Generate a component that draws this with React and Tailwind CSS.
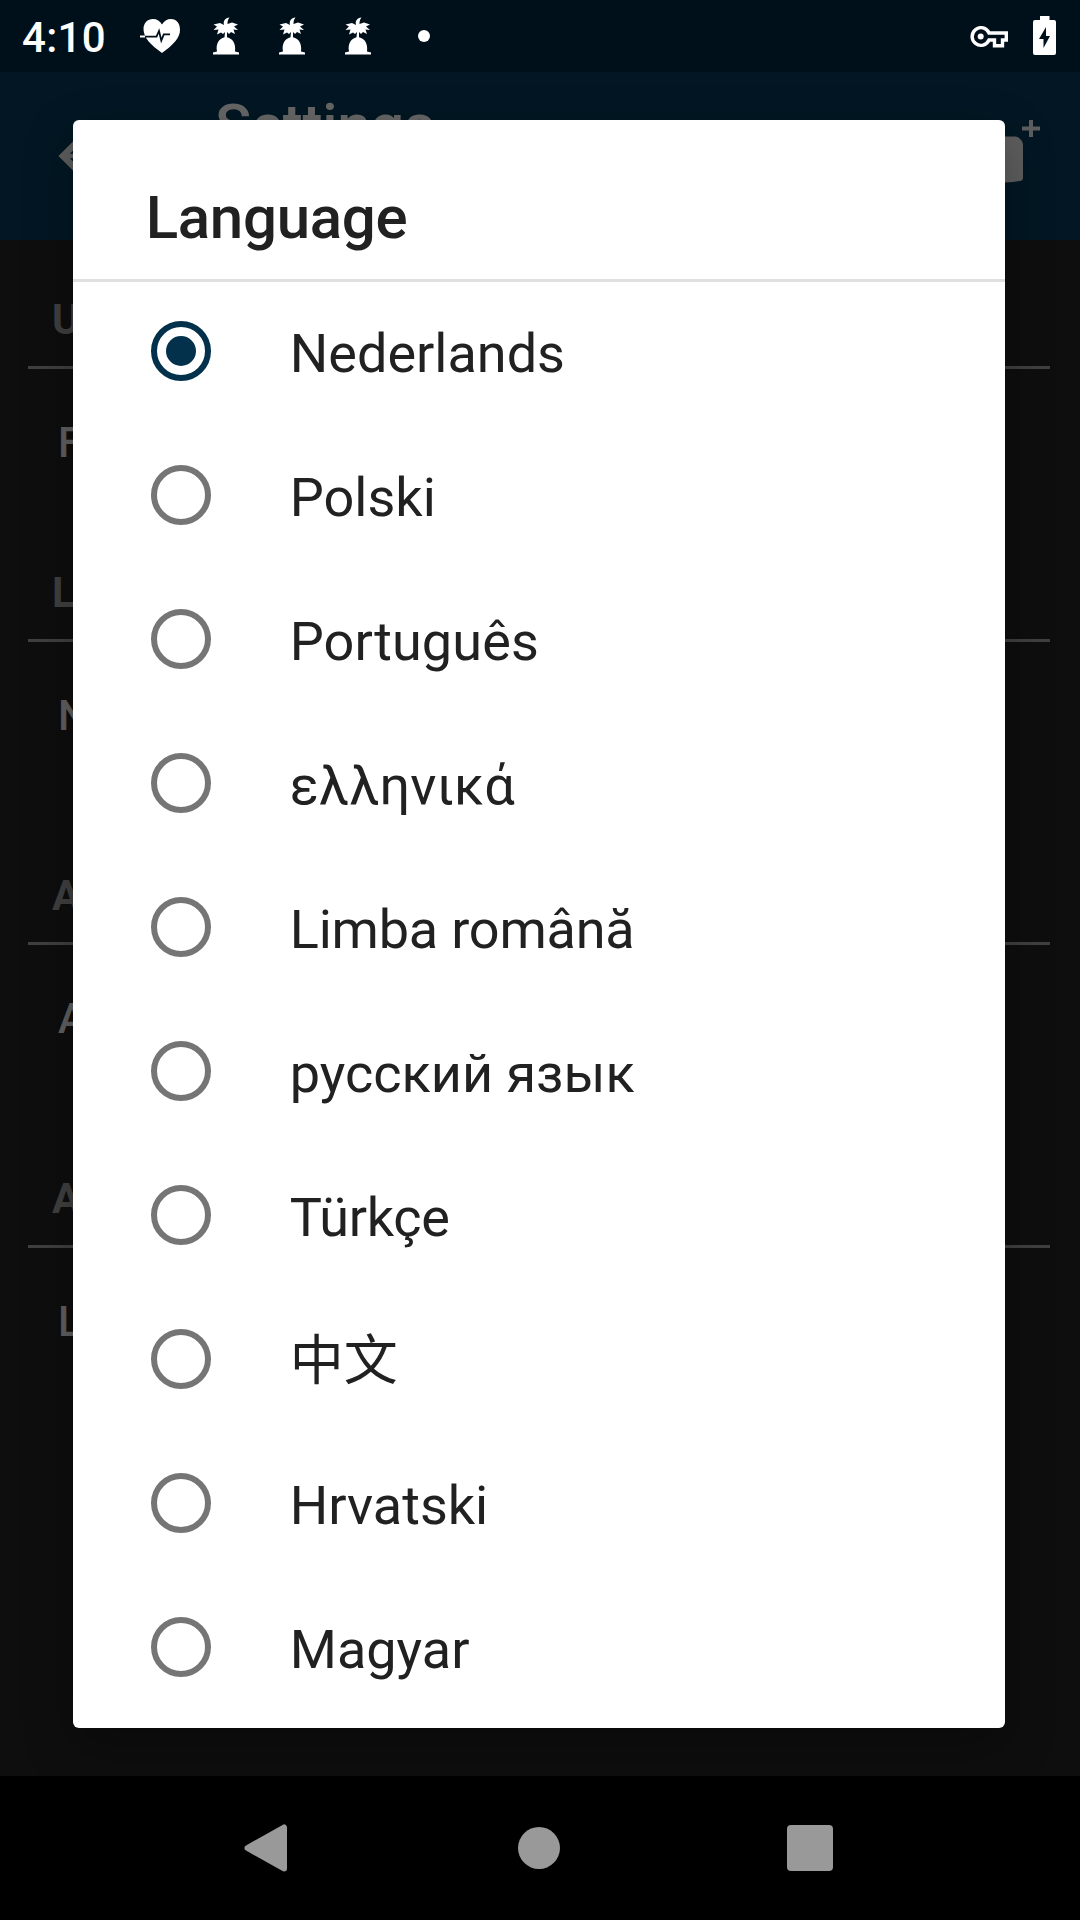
const languages = [
  { name: 'Nederlands' },
  { name: 'Polski' },
  { name: 'Português', tracking: 'tracking-[0.1px]' },
  { name: 'ελληνικά', tracking: 'tracking-[0.1px]' },
  { name: 'Limba română', tracking: 'tracking-[-0.2px]' },
  { name: 'русский язык' },
  { name: 'Türkçe', tracking: 'tracking-[-0.3px]' },
  { name: '中文' },
  { name: 'Hrvatski' },
  { name: 'Magyar' },
];

const sections = [
  { title: 'U', item: 'F', height: 'h-[273px]' },
  { title: 'L', item: 'N', height: 'h-[303px]' },
  { title: 'A', item: 'A', height: 'h-[303px]' },
  { title: 'A', item: 'L', height: 'h-[303px]' },
];

function HeartPulse() {
  return (
    <svg className="ml-[35px] h-[36px] w-[41px]" viewBox="0 0 41 36">
      <path
        fill="#fff"
        d="M22 35 C11 27 3.5 20 3.5 11 C3.5 5 7.500 1 13 1 C17 1 20 3 22 6.500 C24 3 27 1 31 1 C36.500 1 40 5 40 12 C40 20 33 27 22 35 Z"
      />
      <path fill="none" stroke="#00101b" strokeWidth="1.800" d="M4 18.700 H16.500 L19 13 L21.300 22.500 L23.800 16.300 H30" />
      <path stroke="#fff" strokeWidth="2" d="M0 18.500 H5" />
    </svg>
  );
}

function PalmIsland() {
  return (
    <svg className="h-[38px] w-[26px]" viewBox="0 0 26 38" fill="#fff">
      <path d="M0 37.500 V35.500 L4 34.500 C2.500 27 6 21.500 11.500 20.300 L12 15 L10 17 L8 15.500 L4 17.500 L5.500 12.500 L0.500 13 L4 9.500 L0.500 7.500 L7 6 L11 8 C10 4 12 1 16.500 0.500 C14.500 3 14.500 5 14.500 7 L19 5.500 L25 7.500 L21 9.500 L25 13 L20.500 12.500 L22 17 L18 15 L16 17 L14 15 L14 20.300 C20 21.500 23 27 22 34.500 L26 35.500 V37.500 Z" />
    </svg>
  );
}

function StatusBar() {
  return (
    <div className="flex h-[72px] items-start bg-[#00101b] pl-[22px] pr-[24px] text-white">
      <span className="mt-[13px] w-[83px] text-[42px] leading-[50px] font-medium tracking-[0.3px]">4:10</span>
      <div className="mt-[18px] flex">
        <HeartPulse />
      </div>
      <div className="mt-[17px] ml-[32px] flex gap-[40px]">
        <PalmIsland />
        <PalmIsland />
        <PalmIsland />
      </div>
      <div className="mt-[30px] ml-[47px] h-3 w-3 rounded-full bg-white" />
      <svg className="mt-[26px] ml-auto h-[22px] w-[38px]" viewBox="0 0 38 22" fill="none" stroke="#fff" strokeWidth="3.400">
        <path d="M19 7 H36.300 V14 H32.500 V19.800 H24.500 V14 H19 A8.800 8.800 0 1 1 19 7 Z" />
        <circle cx="10.700" cy="10.500" r="3" fill="#fff" stroke="none" />
      </svg>
      <svg className="mt-[16px] ml-[25px] h-[39px] w-[23px]" viewBox="0 0 23 39">
        <path fill="#fff" d="M7 0 H16.500 V4 H21 Q23 4 23 6 V37 Q23 39 21 39 H2 Q0 39 0 37 V6 Q0 4 2 4 H7 Z" />
        <path fill="#00101b" d="M13 11 L6 23 H10.500 V32 L17 20 H13 Z" />
      </svg>
    </div>
  );
}

function Toolbar() {
  return (
    <div className="flex h-[168px] bg-[#021723]">
      <svg className="mt-[60px] ml-[58px] h-[48px] w-[48px]" viewBox="0 0 48 48" fill="none" stroke="#5e5e5e">
        <path strokeWidth="6.500" d="M25 4 L5 24 L25 44" />
        <path strokeWidth="4.500" d="M6 24 H48" />
      </svg>
      <span className="mt-[19px] ml-[109px] text-[60px] leading-[70px] font-medium tracking-[-0.3px] text-[#666]">Settings</span>
      <svg className="mt-[45px] ml-auto mr-[39px] h-[68px] w-[62px]" viewBox="0 0 62 68">
        <path fill="#5e5e5e" d="M0 19.500 H36 Q39 19.500 41 22 Q44 24 44 27 V61 Q44 63.500 41 64 L34 65 L0 67 Z" />
        <path stroke="#5e5e5e" strokeWidth="4" d="M43 11.500 H61 M52 3 V20" />
      </svg>
    </div>
  );
}

function SettingsPage() {
  return (
    <div className="h-[1536px] bg-[#0e0e0e]">
      {sections.map((s, i) => (
        <section key={i} className={s.height}>
          <h2 className="mr-[30px] ml-[28px] h-[129px] border-b-3 border-[#404040] pt-[55px] pl-[24px] text-[42px] leading-[50px] font-bold text-[#404040]">
            {s.title}
          </h2>
          <p className="mt-[49px] pl-[58px] text-[42px] leading-[50px] font-medium text-[#606060]">{s.item}</p>
        </section>
      ))}
    </div>
  );
}

function Radio({ checked }) {
  return checked ? (
    <span className="flex h-[60px] w-[60px] items-center justify-center rounded-full border-6 border-[#03304b]">
      <span className="h-[30px] w-[30px] rounded-full bg-[#03304b]" />
    </span>
  ) : (
    <span className="h-[60px] w-[60px] rounded-full border-6 border-[#757575]" />
  );
}

function LanguageDialog() {
  return (
    <div className="absolute top-[120px] left-[73.400px] h-[1608px] w-[931.300px] overflow-hidden rounded-[6px] bg-white text-[#212121] shadow-[0_18px_50px_rgba(0,0,0,0.3)]">
      <h1 className="h-[162px] border-b-3 border-[#e0e0e0] pt-[63px] pl-[72.300px] text-[60px] leading-[70px] font-medium tracking-[-0.3px]">
        Language
      </h1>
      <ul className="-mt-[3px]">
        {languages.map(({ name, tracking = '' }, i) => (
          <li key={name} className="flex h-[144px] items-center pl-[78.100px]">
            <Radio checked={i === 0} />
            <span className={`mt-[5px] ml-[78.300px] text-[54px] leading-[64px] ${tracking}`}>{name}</span>
          </li>
        ))}
      </ul>
    </div>
  );
}

function NavBar() {
  return (
    <div className="flex h-[144px] items-center bg-black pl-[244px]">
      <svg className="h-[48px] w-[43px]" viewBox="0 0 43 48">
        <path fill="#999" stroke="#999" strokeWidth="6" strokeLinejoin="round" d="M40 3.500 V44.500 L3.500 24 Z" />
      </svg>
      <div className="ml-[231px] h-[42px] w-[42px] rounded-full bg-[#999]" />
      <div className="ml-[226.500px] h-[46px] w-[46px] rounded-[4px] bg-[#999]" />
    </div>
  );
}

export default function App() {
  return (
    <div className="relative h-[1920px] w-[1080px] overflow-hidden bg-black font-['Roboto','Noto_Sans_CJK_SC',sans-serif]">
      <StatusBar />
      <Toolbar />
      <SettingsPage />
      <NavBar />
      <LanguageDialog />
    </div>
  );
}
